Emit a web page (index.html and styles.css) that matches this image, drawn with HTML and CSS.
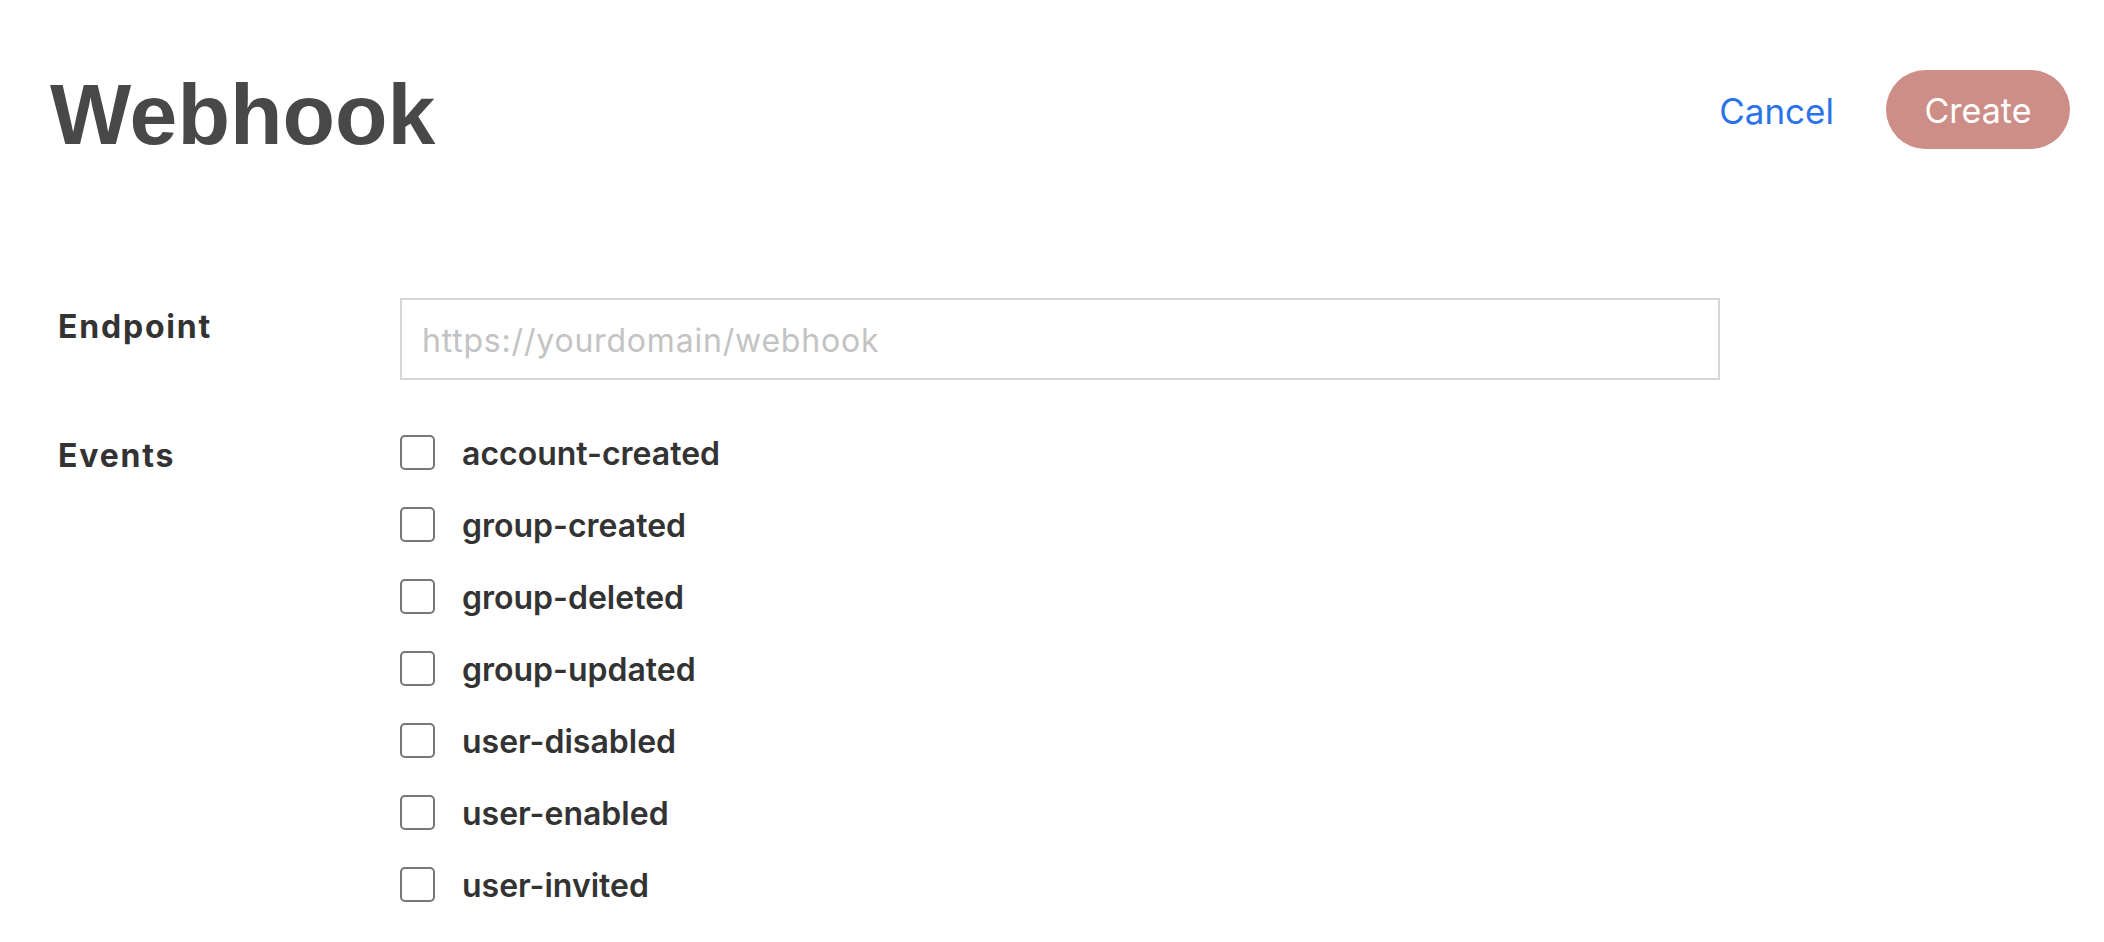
FILE: index.html
```html
<!DOCTYPE html>
<html lang="en">
<head>
<meta charset="utf-8">
<title>Webhook</title>
<link rel="stylesheet" href="styles.css">
</head>
<body>
<header class="header">
  <h1 class="title">Webhook</h1>
  <div class="actions">
    <button class="btn-cancel" type="button">Cancel</button>
    <button class="btn-create" type="button">Create</button>
  </div>
</header>
<form class="form">
  <label class="label label-endpoint" for="endpoint">Endpoint</label>
  <input class="input" id="endpoint" type="text" placeholder="https://yourdomain/webhook">
  <div class="label label-events">Events</div>
  <div class="events">
    <label class="event"><input class="check" type="checkbox"><span class="event-name">account-created</span></label>
    <label class="event"><input class="check" type="checkbox"><span class="event-name">group-created</span></label>
    <label class="event"><input class="check" type="checkbox"><span class="event-name">group-deleted</span></label>
    <label class="event"><input class="check" type="checkbox"><span class="event-name">group-updated</span></label>
    <label class="event"><input class="check" type="checkbox"><span class="event-name">user-disabled</span></label>
    <label class="event"><input class="check" type="checkbox"><span class="event-name">user-enabled</span></label>
    <label class="event"><input class="check" type="checkbox"><span class="event-name">user-invited</span></label>
  </div>
</form>
</body>
</html>
```
FILE: styles.css
```css
* { box-sizing: border-box; }
html, body { margin: 0; padding: 0; background: #ffffff; }
body { font-family: Inter, "Noto Sans", sans-serif; color: #333333; }

.header {
  display: flex;
  justify-content: space-between;
  align-items: flex-start;
  padding: 70px 34px 0 50px;
}
.title {
  margin: 1px 0 0;
  font-family: "Liberation Sans", Arial, sans-serif;
  font-weight: 700;
  font-size: 86px;
  line-height: 86px;
  color: #484848;
}
.actions {
  display: flex;
  align-items: center;
  height: 79px;
}
.btn-cancel {
  border: 0;
  background: none;
  padding: 3px 0 0;
  margin-right: 52px;
  font-family: Inter, sans-serif;
  font-size: 35px;
  color: #2a73e8;
  cursor: pointer;
}
.btn-create {
  width: 184px;
  height: 79px;
  border: 0;
  border-radius: 40px;
  background: #cd8e88;
  color: #ffffff;
  font-family: Inter, sans-serif;
  font-size: 34px;
  padding: 2px 0 0;
  cursor: pointer;
}

.form {
  display: grid;
  grid-template-columns: 342px 1320px;
  row-gap: 53px;
  padding: 141px 0 0 58px;
}
.label {
  font-weight: 700;
  font-size: 32px;
  letter-spacing: 1.8px;
  color: #333333;
}
.label-endpoint { padding-top: 9px; }
.label-events { padding-top: 3px; }
.input {
  width: 1320px;
  height: 82px;
  border: 2px solid #d6d6d6;
  border-radius: 0;
  padding: 2px 20px 0;
  font-family: Inter, sans-serif;
  font-size: 32px;
  letter-spacing: 0.8px;
  color: #333333;
  outline: none;
}
.input::placeholder { color: #c3c3c3; }

.events {
  display: flex;
  flex-direction: column;
  gap: 33px;
}
.event {
  display: flex;
  align-items: center;
  height: 39px;
}
.check {
  appearance: none;
  -webkit-appearance: none;
  width: 35px;
  height: 35px;
  margin: 0 27px 0 0;
  border: 2px solid #777777;
  border-radius: 5px;
  background: #ffffff;
  flex: none;
}
.event-name {
  font-weight: 600;
  font-size: 32px;
  color: #333333;
  padding-top: 1px;
}
```
